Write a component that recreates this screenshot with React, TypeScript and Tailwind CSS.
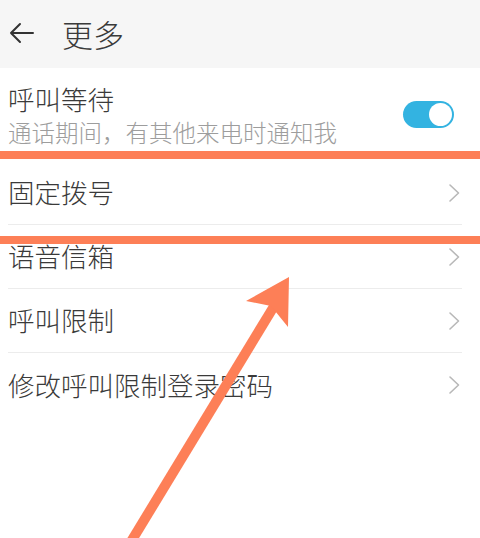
const rows = ["固定拨号", "语音信箱", "呼叫限制", "修改呼叫限制登录密码"];

function Toggle() {
    return (
        <div className="flex h-[27px] w-[51px] items-center justify-end rounded-full bg-[#33b3e1] px-[2px]">
            <div className="h-[23px] w-[23px] rounded-full bg-white" />
        </div>
    );
}

function Chevron() {
    return (
        <svg width="12" height="20" viewBox="0 0 12 20" fill="none" stroke="#b8b8b8" strokeWidth="1.6" strokeLinecap="round" strokeLinejoin="round">
            <path d="M2 2l8.5 8L2 18" />
        </svg>
    );
}

export default function App() {
    return (
        <div className="relative h-[538px] w-[480px] overflow-hidden bg-white font-light text-[#3a3a3a] font-['Noto_Sans_CJK_SC',sans-serif]">
            {/* header */}
            <div className="flex h-[68px] items-center bg-[#f6f6f6]">
                <svg width="26" height="22" viewBox="0 0 26 22" className="ml-[9px] mt-[-2px]" fill="none" stroke="#333" strokeWidth="2" strokeLinecap="round" strokeLinejoin="round">
                    <path d="M24 11H2M11 2L2 11l9 9" />
                </svg>
                <span className="ml-[27px] mt-[-2px] text-[31px] leading-none">更多</span>
            </div>

            {/* call waiting */}
            <div className="flex h-[93px] items-center justify-between pl-2 pr-[26px]">
                <div className="flex flex-col">
                    <span className="text-[26.5px] leading-[34px]">呼叫等待</span>
                    <span className="text-[23.5px] leading-[32px] text-[#9d9d9d]">通话期间，有其他来电时通知我</span>
                </div>
                <Toggle />
            </div>

            {rows.map((r, i) => (
                <div key={r} className={"ml-2 mr-[18px] flex h-[64px] items-center justify-between " + (i < rows.length - 1 ? "border-b border-[#ececec]" : "")}>
                    <span className="text-[26.5px] leading-none">{r}</span>
                    <div className="mr-[2px]">
                        <Chevron />
                    </div>
                </div>
            ))}

            {/* annotation marks */}
            <svg className="pointer-events-none absolute inset-0" width="480" height="538" viewBox="0 0 480 538">
                <rect x="0" y="151" width="480" height="8" fill="#fd7f57" />
                <rect x="0" y="236" width="480" height="8" fill="#fd7f57" />
                <line x1="129" y1="545" x2="276" y2="303" stroke="#fd7f57" strokeWidth="10" />
                <polygon points="289,277 246,301 271,306 288,327" fill="#fd7f57" />
            </svg>
        </div>
    );
}
